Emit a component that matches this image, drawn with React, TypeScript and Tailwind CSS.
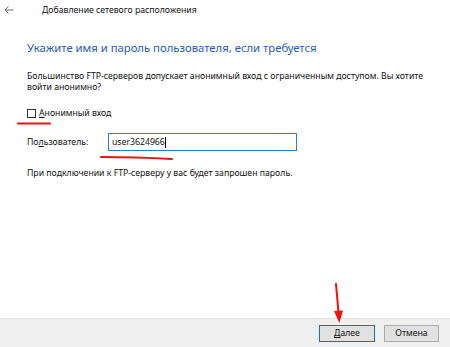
import React from 'react';

const font = { fontFamily: '"Noto Sans", "Open Sans", sans-serif' };

export default function App() {
  return (
    <div className="relative flex h-[347px] w-[450px] flex-col overflow-hidden bg-white text-[8.7px] text-[#111111]" style={font}>
      {/* title bar */}
      <div className="flex h-[20px] items-center">
        <svg className="ml-[4px] h-[10px] w-[10px]" viewBox="0 0 10 10" fill="none" stroke="#6b6b6b" strokeWidth="1">
          <path d="M9.5 5H1M4.5 1.5L1 5l3.5 3.5" />
        </svg>
        <span className="ml-[28px] leading-[12px]">Добавление сетевого расположения</span>
      </div>

      <div className="flex flex-col pl-[27px] pr-[12px]">
        <h1 className="mt-[20px] text-[11.3px] leading-[16px] font-normal text-[#1e5bb8]">
          Укажите имя и пароль пользователя, если требуется
        </h1>
        <p className="mt-[15px] leading-[11px]">
          Большинство FTP-серверов допускает анонимный вход с ограниченным доступом. Вы хотите войти анонимно?
        </p>

        <label className="mt-[14px] flex h-[12px] items-center">
          <span className="h-[9px] w-[9px] border border-[#333333] bg-white" />
          <span className="ml-[3px] leading-[12px]">
            <span className="underline underline-offset-[1px]">А</span>нонимный вход
          </span>
        </label>

        <div className="mt-[14px] flex items-center">
          <span className="w-[81px] leading-[12px]">
            По<span className="underline underline-offset-[1px]">л</span>ьзователь:
          </span>
          <div className="flex h-[18px] w-[189px] items-center border border-[#2f7bc4] px-[3px]">
            <span className="leading-[12px]">user3624966</span>
            <span className="h-[11px] w-px bg-black" />
          </div>
        </div>

        <p className="mt-[17px] leading-[11px]">При подключении к FTP-серверу у вас будет запрошен пароль.</p>
      </div>

      {/* footer */}
      <div className="mt-auto flex h-[29px] items-center justify-end gap-[9px] border-t border-[#e3e3e3] bg-[#f0f0f0] pr-[11px]">
        <button className="flex h-[17px] w-[56px] items-center justify-center border border-[#0078d7] bg-[#e1e1e1] leading-[12px]">
          <span><span className="underline underline-offset-[1px]">Д</span>алее</span>
        </button>
        <button className="flex h-[17px] w-[55px] items-center justify-center border border-[#adadad] bg-[#e1e1e1] leading-[12px]">
          Отмена
        </button>
      </div>

      {/* red annotations drawn over the screenshot */}
      <svg className="pointer-events-none absolute left-0 top-0" width="450" height="347" viewBox="0 0 450 347">
        <path d="M18 123.5 L50 123.5" stroke="#ee1111" strokeWidth="2" strokeLinecap="round" />
        <path d="M101 157 Q135 157 172 159" stroke="#ee1111" strokeWidth="2" fill="none" strokeLinecap="round" />
        <path d="M336 284 L338.5 313" stroke="#ee1111" strokeWidth="2" strokeLinecap="round" />
        <path d="M334 311 L343 310.5 L339.3 323 Z" fill="#ee1111" />
      </svg>
    </div>
  );
}
